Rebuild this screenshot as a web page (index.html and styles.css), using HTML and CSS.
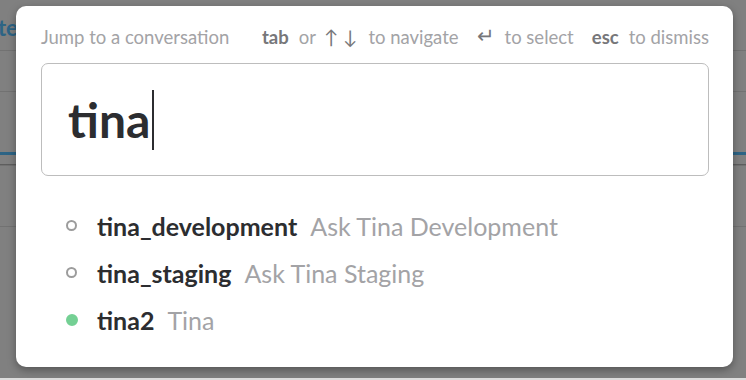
FILE: index.html
```html
<!DOCTYPE html>
<html lang="en">
<head>
    <meta charset="UTF-8">
    <title>Jump to a conversation</title>
    <link rel="stylesheet" href="styles.css">
</head>
<body>
    <div class="app">
        <div class="app-title">te</div>
        <div class="app-rule"></div>
        <div class="app-row"></div>
        <div class="app-row app-row-active"></div>
        <div class="app-row"></div>
        <div class="app-row"></div>
    </div>

    <div class="switcher">
        <div class="switcher-head">
            <span class="switcher-label">Jump to a conversation</span>
            <div class="switcher-hints">
                <span class="hint hint-nav"><b>tab</b> <span>or</span> <span class="arrows">&uarr; &darr;</span> <span>to navigate</span></span>
                <span class="hint"><span class="enter">&#8629;</span> <span>to select</span></span>
                <span class="hint"><b>esc</b> <span>to dismiss</span></span>
            </div>
        </div>

        <div class="switcher-input">
            <span class="query">tina</span><span class="caret"></span>
        </div>

        <ul class="results">
            <li><span class="presence"></span><span class="name">tina_development</span><span class="desc">Ask Tina Development</span></li>
            <li><span class="presence"></span><span class="name">tina_staging</span><span class="desc">Ask Tina Staging</span></li>
            <li><span class="presence active"></span><span class="name">tina2</span><span class="desc">Tina</span></li>
        </ul>
    </div>
</body>
</html>
```

FILE: styles.css
```css
body {
    font-family: 'Lato', sans-serif;
    background-color: #808080;
    margin: 0;
    width: 746px;
    height: 380px;
    overflow: hidden;
    position: relative;
    border-bottom: 2px solid #dcdcdc;
    box-sizing: border-box;
}

/* dimmed app behind the overlay */
.app {
    padding-top: 16px;
}

.app-title {
    color: #2d6485;
    font-size: 22px;
    font-weight: 700;
    line-height: 24px;
    margin-left: -2px;
    height: 34px;
}

.app-rule {
    border-top: 1px solid #727272;
    height: 40px;
}

.app-row {
    border-top: 1px solid #727272;
    height: 60px;
}

.app-row-active {
    border-top: 3px solid #2d6485;
    height: 9px;
    border-bottom: 1px solid #5e5e5e;
}

.switcher {
    position: absolute;
    left: 16px;
    top: 6px;
    width: 717px;
    height: 361px;
    box-sizing: border-box;
    background-color: #fff;
    border-radius: 10px;
    box-shadow: 0 3px 8px rgba(0, 0, 0, 0.35);
    padding: 0 24px 0 25px;
}

.switcher-head {
    display: flex;
    justify-content: space-between;
    align-items: center;
    height: 57px;
    padding-top: 4px;
    box-sizing: border-box;
    font-size: 18.5px;
    color: #a3a3a6;
    white-space: nowrap;
}

.switcher-hints {
    display: flex;
    gap: 18px;
}

.hint {
    display: flex;
    align-items: center;
    gap: 10px;
}

.hint-nav {
    gap: 8px;
}

.hint-nav b {
    margin-right: 2px;
}

.hint b {
    color: #77777a;
    font-weight: 700;
}

.arrows {
    color: #77777a;
    font-size: 19px;
    margin-right: 3px;
}

.enter {
    color: #77777a;
    font-size: 21px;
    position: relative;
    top: -2px;
}

.switcher-input {
    height: 113px;
    box-sizing: border-box;
    border: 1px solid #bdbdbd;
    border-radius: 7px;
    display: flex;
    align-items: center;
    padding-left: 26px;
}

.query {
    font-size: 48px;
    font-weight: 700;
    color: #2c2d30;
}

.caret {
    display: inline-block;
    width: 1.5px;
    height: 60px;
    background-color: #2c2d30;
    margin-left: 2px;
}

.results {
    list-style: none;
    padding: 26px 0 0 25px;
    margin: 0;
}

.results li {
    display: flex;
    align-items: center;
    height: 47px;
    font-size: 25px;
}

.presence {
    width: 11px;
    height: 11px;
    box-sizing: border-box;
    border: 2px solid #9c9c9c;
    border-radius: 50%;
    margin-right: 20px;
}

.presence.active {
    width: 12px;
    height: 12px;
    margin-left: -0.5px;
    margin-right: 19.5px;
    background-color: #74d094;
    border-color: #74d094;
}

.name {
    font-weight: 700;
    color: #2c2d30;
    margin-right: 13px;
}

.desc {
    color: #a3a3a6;
}
```
